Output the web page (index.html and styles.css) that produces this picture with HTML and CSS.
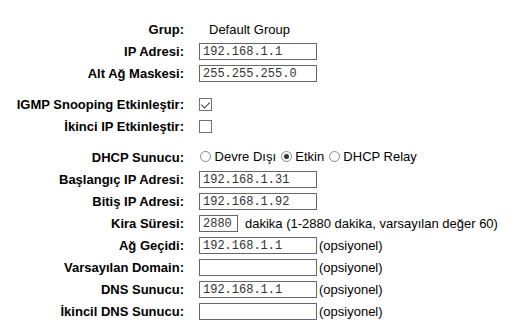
FILE: index.html
```html
<!DOCTYPE html>
<html lang="tr">
<head>
  <meta charset="UTF-8">
  <title>LAN Ayarları</title>
  <link rel="stylesheet" href="styles.css">
</head>
<body>
  <p class="intro">Bu alanda LAN ayarları ile DHCP sunucu ayarlarını gör ve değiştir.</p>

  <div class="form">
    <div class="row">
      <label>Grup:</label>
      <div class="value group">Default Group</div>
    </div>
    <div class="row">
      <label>IP Adresi:</label>
      <div class="value"><input type="text" class="ip" value="192.168.1.1"></div>
    </div>
    <div class="row">
      <label>Alt Ağ Maskesi:</label>
      <div class="value"><input type="text" class="ip" value="255.255.255.0"></div>
    </div>

    <div class="spacer"></div>

    <div class="row">
      <label>IGMP Snooping Etkinleştir:</label>
      <div class="value"><input type="checkbox" checked></div>
    </div>
    <div class="row">
      <label>İkinci IP Etkinleştir:</label>
      <div class="value"><input type="checkbox"></div>
    </div>

    <div class="spacer"></div>

    <div class="row">
      <label>DHCP Sunucu:</label>
      <div class="radios">
        <input type="radio" name="dhcp"> Devre Dışı
        <input type="radio" name="dhcp" checked> Etkin
        <input type="radio" name="dhcp"> DHCP Relay
      </div>
    </div>
    <div class="row">
      <label>Başlangıç IP Adresi:</label>
      <div class="value"><input type="text" class="ip" value="192.168.1.31"></div>
    </div>
    <div class="row">
      <label>Bitiş IP Adresi:</label>
      <div class="value"><input type="text" class="ip" value="192.168.1.92"></div>
    </div>
    <div class="row">
      <label>Kira Süresi:</label>
      <div class="value"><input type="text" class="short" value="2880"> <span class="note">dakika (1-2880 dakika, varsayılan değer 60)</span></div>
    </div>
    <div class="row">
      <label>Ağ Geçidi:</label>
      <div class="value"><input type="text" class="ip" value="192.168.1.1">(opsiyonel)</div>
    </div>
    <div class="row">
      <label>Varsayılan Domain:</label>
      <div class="value"><input type="text" class="ip" value="">(opsiyonel)</div>
    </div>
    <div class="row">
      <label>DNS Sunucu:</label>
      <div class="value"><input type="text" class="ip" value="192.168.1.1">(opsiyonel)</div>
    </div>
    <div class="row">
      <label>İkincil DNS Sunucu:</label>
      <div class="value"><input type="text" class="ip" value="">(opsiyonel)</div>
    </div>
  </div>
</body>
</html>
```

FILE: styles.css
```css
body {
  margin: 0;
  padding: 0 8px;
  background: #fff;
  color: #000;
  font-family: "Liberation Sans", Arial, sans-serif;
  font-size: 13px;
  overflow: hidden;
}

/* only the descenders of this line are visible */
.intro {
  margin: -16px 0 0 0;
  height: 18px;
  line-height: 15px;
  padding-left: 120px;
  white-space: nowrap;
  overflow: hidden;
}

.form {
  margin-top: 16px;
}

.row {
  display: grid;
  grid-template-columns: 176px auto;
  column-gap: 15px;
  align-items: center;
  height: 22px;
}

.row label {
  font-weight: bold;
  text-align: right;
}

.value {
  display: flex;
  align-items: center;
  white-space: nowrap;
}

.group {
  padding-left: 10px;
}

.spacer {
  height: 9px;
}

input[type="text"] {
  font-family: "Liberation Mono", "Courier New", monospace;
  font-size: 12px;
  height: 17px;
  box-sizing: border-box;
  border: 1px solid #666;
  padding: 0 3px;
  margin: 1px 2px 0 0;
  color: #333;
}

input.ip {
  width: 118px;
}

input.short {
  width: 39px;
}

.note {
  margin-left: 5px;
}

input[type="checkbox"] {
  appearance: none;
  width: 13px;
  height: 13px;
  margin: 0;
  border: 1px solid #707070;
  background: #fff;
  position: relative;
}

input[type="checkbox"]:checked::after {
  content: "";
  position: absolute;
  left: 3px;
  top: 1px;
  width: 4px;
  height: 7px;
  border: solid #333;
  border-width: 0 1.5px 1.5px 0;
  transform: rotate(45deg);
}

.radios {
  white-space: nowrap;
  line-height: 22px;
}

.radios input[type="radio"] {
  appearance: none;
  width: 11px;
  height: 11px;
  margin: 0 0 0 1px;
  border: 1px solid #888;
  border-radius: 50%;
  background: #fff;
  vertical-align: -1px;
  position: relative;
}

.radios input[type="radio"]:checked::after {
  content: "";
  position: absolute;
  left: 2px;
  top: 2px;
  width: 5px;
  height: 5px;
  border-radius: 50%;
  background: #333;
}
```
